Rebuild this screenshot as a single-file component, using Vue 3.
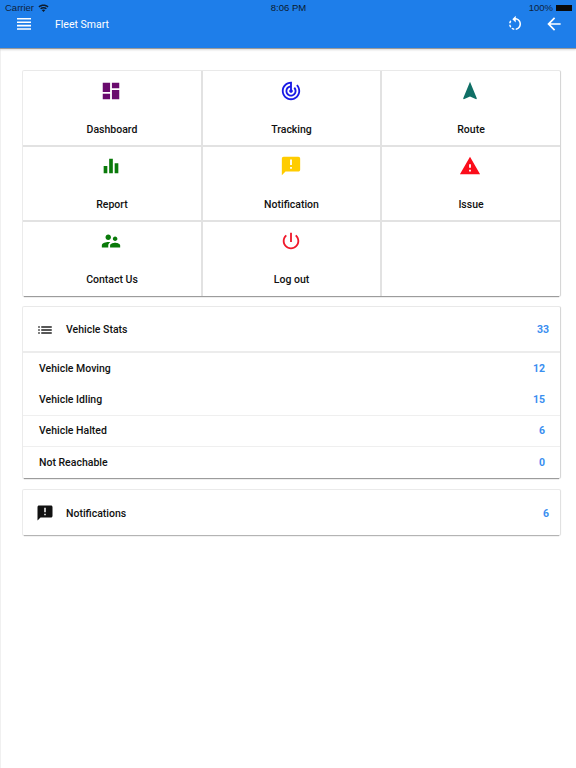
<script setup>
const tiles = [
  { label: 'Dashboard', color: '#6a0a6e', d: 'M3 13h8V3H3v10zm0 8h8v-6H3v6zm10 0h8V11h-8v10zm0-18v6h8V3h-8z' },
  { label: 'Tracking', color: '#1a1ae6', d: 'M19.07 4.93l-1.41 1.41C19.1 7.79 20 9.79 20 12c0 4.42-3.58 8-8 8s-8-3.58-8-8c0-4.08 3.05-7.44 7-7.93v2.02C8.16 6.57 6 9.03 6 12c0 3.31 2.69 6 6 6s6-2.69 6-6c0-1.66-.67-3.16-1.76-4.24l-1.41 1.41C15.55 9.9 16 10.9 16 12c0 2.21-1.79 4-4 4s-4-1.79-4-4c0-1.86 1.28-3.41 3-3.86v2.14c-.6.35-1 .98-1 1.72 0 1.1.9 2 2 2s2-.9 2-2c0-.74-.4-1.38-1-1.72V2h-1C6.48 2 2 6.48 2 12s4.48 10 10 10 10-4.48 10-10c0-2.76-1.12-5.26-2.93-7.07z' },
  { label: 'Route', color: '#0f6f66', d: 'M12 2L4.5 20.29l.71.71L12 18l6.79 3 .71-.71z' },
  { label: 'Report', color: '#0a7a0a', d: 'M10 20h4V4h-4v16zm-6 0h4v-8H4v8zM16 9v11h4V9h-4z' },
  { label: 'Notification', color: '#ffcc00', d: 'M20 2H4c-1.1 0-1.99.9-1.99 2L2 22l4-4h14c1.1 0 2-.9 2-2V4c0-1.1-.9-2-2-2zm-7 9h-2V5h2v6zm0 4h-2v-2h2v2z' },
  { label: 'Issue', color: '#fb0d1b', d: 'M1 21h22L12 2 1 21zm12-3h-2v-2h2v2zm0-4h-2v-4h2v4z' },
  { label: 'Contact Us', color: '#0a7a0a', d: 'M16.5 12c1.38 0 2.49-1.12 2.49-2.5S17.88 7 16.5 7C15.12 7 14 8.12 14 9.5s1.12 2.5 2.5 2.5zM9 11c1.66 0 2.99-1.34 2.99-3S10.66 5 9 5C7.34 5 6 6.34 6 8s1.34 3 3 3zm7.5 3c-1.83 0-5.5.92-5.5 2.75V19h11v-2.25c0-1.83-3.67-2.75-5.5-2.75zM9 13c-2.33 0-7 1.17-7 3.5V19h7v-2.25c0-.85.33-2.34 2.37-3.47C10.5 13.1 9.66 13 9 13z' },
  { label: 'Log out', color: '#f01a2c', d: 'M13 3h-2v10h2V3zm4.83 2.17l-1.42 1.42C17.99 7.86 19 9.81 19 12c0 3.87-3.13 7-7 7s-7-3.13-7-7c0-2.19 1.01-4.14 2.58-5.42L6.17 5.17C4.23 6.82 3 9.26 3 12c0 4.97 4.03 9 9 9s9-4.03 9-9c0-2.74-1.23-5.18-3.17-6.83z' },
  { label: '', color: '', d: '' },
]

const stats = [
  { label: 'Vehicle Moving', value: 12, line: false },
  { label: 'Vehicle Idling', value: 15, line: true },
  { label: 'Vehicle Halted', value: 6, line: true },
  { label: 'Not Reachable', value: 0, line: false },
]
</script>

<template>
  <div class="page">
    <header class="appbar">
      <div class="status">
        <span class="carrier">
          Carrier
          <svg class="wifi" viewBox="0 0 24 18" width="11" height="8">
            <path fill="#0d1b2c" d="M12 18l-4-4.400c2.300-2 5.700-2 8 0zM6.600 12L4.400 9.600c4.300-3.700 10.900-3.700 15.200 0L17.400 12c-3.100-2.600-7.700-2.600-10.800 0zM3 8L.6 5.400c6.500-5.700 16.300-5.700 22.800 0L21 8C15.800 3.500 8.200 3.500 3 8z" />
          </svg>
        </span>
        <span class="clock">8:06 PM</span>
        <span class="battery">100% <i class="cell"></i></span>
      </div>
      <div class="toolbar">
        <svg class="menu" viewBox="0 0 14 12" width="14" height="12">
          <path fill="#fff" d="M0 0h14v1.600H0zM0 3.400h14V5H0zM0 6.800h14v1.600H0zM0 10.200h14v1.600H0z" />
        </svg>
        <span class="title">Fleet Smart</span>
        <svg class="sync" viewBox="0 0 24 24" width="18" height="18">
          <path fill="#fff" d="M7.110 8.530L5.700 7.110C4.800 8.270 4.240 9.610 4.070 11h2.020c.14-.87.49-1.720 1.020-2.470zM6.090 13H4.070c.17 1.390.72 2.730 1.620 3.890l1.410-1.420c-.52-.75-.87-1.590-1.010-2.470zm1.010 5.320c1.160.9 2.510 1.440 3.900 1.610V17.900c-.87-.15-1.710-.49-2.460-1.030L7.100 18.320zM13 4.070V1L8.450 5.550 13 10V6.090c2.840.48 5 2.940 5 5.910s-2.160 5.430-5 5.910v2.020c3.950-.49 7-3.850 7-7.930s-3.050-7.440-7-7.930z" />
        </svg>
        <svg viewBox="0 0 24 24" width="20" height="20">
          <path fill="#fff" d="M20 11H7.830l5.590-5.590L12 4l-8 8 8 8 1.410-1.410L7.830 13H20v-2z" />
        </svg>
      </div>
    </header>

    <main class="content">
      <section class="card tiles">
        <div v-for="(tile, i) in tiles" :key="i" class="tile">
          <svg v-if="tile.d" viewBox="0 0 24 24" width="22" height="22">
            <path :fill="tile.color" :d="tile.d" />
          </svg>
          <span class="tile-label">{{ tile.label }}</span>
        </div>
      </section>

      <section class="card">
        <div class="card-head">
          <svg viewBox="0 0 24 24" width="18" height="18">
            <path fill="#222" d="M3 13h2v-2H3v2zm0 4h2v-2H3v2zm0-8h2V7H3v2zm4 4h14v-2H7v2zm0 4h14v-2H7v2zM7 7v2h14V7H7z" />
          </svg>
          <span class="head-label">Vehicle Stats</span>
          <span class="count">33</span>
        </div>
        <div class="stats">
          <div v-for="row in stats" :key="row.label" class="stat" :class="{ ruled: row.line }">
            <span>{{ row.label }}</span>
            <span class="count">{{ row.value }}</span>
          </div>
        </div>
      </section>

      <section class="card notes">
        <div class="card-head plain">
          <svg viewBox="0 0 24 24" width="18" height="18">
            <path fill="#111" d="M20 2H4c-1.100 0-1.990.9-1.990 2L2 22l4-4h14c1.100 0 2-.9 2-2V4c0-1.100-.9-2-2-2zm-7 9h-2V5h2v6zm0 4h-2v-2h2v2z" />
          </svg>
          <span class="head-label">Notifications</span>
          <span class="count">6</span>
        </div>
      </section>
    </main>
  </div>
</template>

<style>
html,
body {
  margin: 0;
  background: #fff;
}
</style>

<style scoped>
.page {
  height: 768px;
  overflow: hidden;
  background: #fff;
  font-family: Roboto, "Liberation Sans", sans-serif;
  color: #111;
}

.appbar {
  position: relative;
  height: 48px;
  background: #1e7eea;
  box-shadow: 0 1px 0 #9a9a9a, 0 2px 2px rgba(0, 0, 0, 0.15);
}

.status {
  display: grid;
  grid-template-columns: 1fr auto 1fr;
  align-items: center;
  height: 15px;
  padding: 0 4px 0 5px;
  font-family: "Liberation Sans", sans-serif;
  font-size: 9.500px;
  color: #10233c;
}

.carrier {
  display: flex;
  align-items: center;
  gap: 4px;
}

.clock {
  color: #0b1a2c;
}

.battery {
  display: flex;
  align-items: center;
  justify-content: flex-end;
  gap: 3px;
}

.cell {
  width: 15px;
  height: 6px;
  background: #0a0a0a;
  border-right: 1px solid #0a0a0a;
}

.toolbar {
  display: flex;
  align-items: center;
  height: 18px;
  padding: 0 12px 0 17px;
}

.title {
  margin-left: 24px;
  flex: 1;
  font-size: 10.500px;
  color: #fff;
}

.sync {
  margin-right: 20px;
}

.content {
  display: flex;
  flex-direction: column;
  gap: 11px;
  height: 720px;
  box-sizing: border-box;
  padding: 23px 16px 0 22px;
  border-left: 1px solid #f0f0f0;
}

.card {
  background: #fff;
  border-radius: 1px;
  box-shadow: 0 2px 1px -1px #9c9c9c, 1px 0 1px #d4d4d4, 0 0 0 1px #ebebeb;
}

.notes {
  margin-top: 1px;
  box-shadow: 0 2px 1px -1px #b4b4b4, 1px 0 1px #e0e0e0, 0 0 0 1px #ebebeb;
}

.tiles {
  display: grid;
  grid-template-columns: 180px 179px 1fr;
  grid-template-rows: 76px 75px 74px;
}

.tile {
  display: flex;
  flex-direction: column;
  align-items: center;
  padding-top: 8px;
  box-sizing: border-box;
  border-right: 2px solid #e2e2e2;
  border-bottom: 2px solid #e2e2e2;
}

.tile:nth-child(-n + 3) {
  padding-top: 9px;
}

.tile:nth-child(3n) {
  border-right: 0;
}

.tile:nth-child(n + 7) {
  border-bottom: 0;
}

.tile svg {
  margin-right: 2px;
}

.tile:nth-child(3n) svg {
  margin-right: 3px;
}

.tile-label {
  margin-top: 21px;
  font-size: 10.500px;
  line-height: 14px;
  font-weight: 500;
}

.card-head {
  display: flex;
  align-items: center;
  height: 46px;
  box-sizing: border-box;
  padding: 1px 11px 0 13px;
  border-bottom: 2px solid #ececec;
}

.card-head.plain {
  height: 45px;
  border-bottom: 0;
}

.head-label {
  flex: 1;
  margin-left: 12px;
  font-size: 10.500px;
  font-weight: 500;
}

.count {
  font-size: 10.500px;
  font-weight: 700;
  color: #3a8ef0;
}

.stat {
  display: flex;
  align-items: center;
  justify-content: space-between;
  height: 31.250px;
  padding: 0 15px 0 16px;
  box-sizing: border-box;
  font-size: 10.500px;
  font-weight: 500;
}

.stat.ruled {
  border-bottom: 1px solid #efefef;
}
</style>
